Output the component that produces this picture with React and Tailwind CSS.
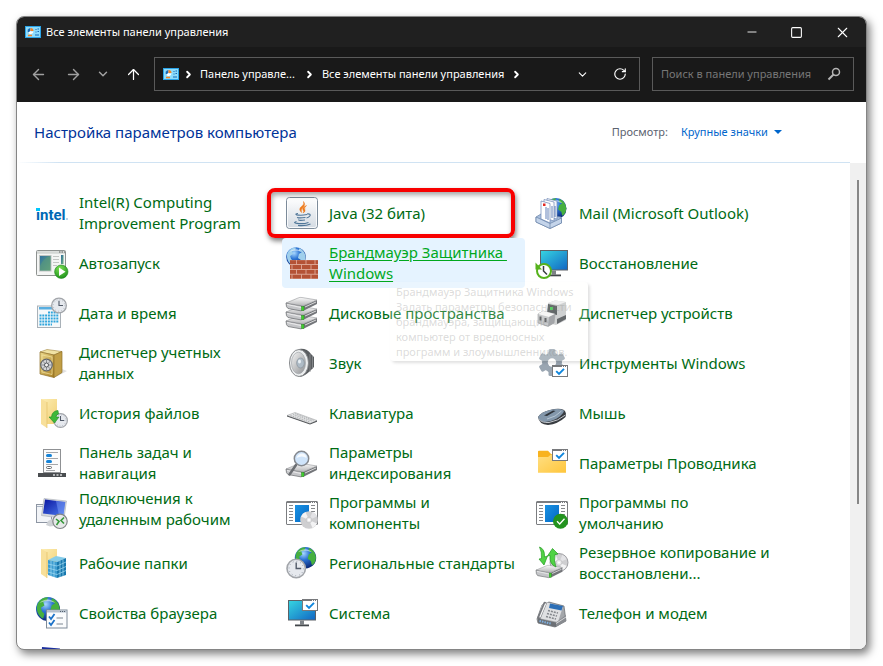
import {
  ArrowLeft,
  ArrowRight,
  ArrowUp,
  ChevronDown,
  ChevronRight,
  Minus,
  RotateCw,
  Square,
  X
} from "lucide-react";

/* ---------- shared gradients ---------- */

function IconDefs() {
  const stops = (id, a, b, vertical) => (
    <linearGradient id={id} x1="0" y1="0" x2={vertical ? "0" : "1"} y2="1">
      <stop offset="0" stopColor={a} />
      <stop offset="1" stopColor={b} />
    </linearGradient>
  );

  return (
    <svg className="absolute size-0" aria-hidden="true">
      <defs>
        {stops("screen", "#35d3e0", "#1268c4")}
        {stops("app", "#1a93e4", "#0568c4")}
        {stops("folder", "#ffdf83", "#ffc63c")}
        {stops("pale", "#fdeeb4", "#f1cf74")}
        {stops("metal", "#fafafa", "#b4b4b6", true)}
        {stops("steel", "#f4f4f4", "#8f9194")}
        {stops("gold", "#ecd98c", "#a97f22")}
        {stops("tube", "#0a16a0", "#4d7df0")}
        {stops("photo", "#2d6f9e", "#6fae7c")}
        {stops("tile", "#ffffff", "#d3dae2", true)}
        <radialGradient id="ocean" cx="0.4" cy="0.3" r="0.75">
          <stop offset="0" stopColor="#a8d8ff" />
          <stop offset="0.4" stopColor="#2c74d4" />
          <stop offset="1" stopColor="#08206e" />
        </radialGradient>
        <radialGradient id="green" cx="0.4" cy="0.25" r="0.8">
          <stop offset="0" stopColor="#7be052" />
          <stop offset="1" stopColor="#1c8f1a" />
        </radialGradient>
      </defs>
    </svg>
  );
}

/* ---------- icon parts ---------- */

function Globe({ x, y, r, land = "#46b03f" }) {
  return (
    <g transform={`translate(${x} ${y}) scale(${r / 10})`}>
      <circle r="10" fill="url(#ocean)" />
      <path d="M-9-3C-8-7-4-10 0-9.8L-1-7-4-6-3-3-6-1-5 2-3 4-4 8C-8 6-10 1-9-3Z" fill={land} />
      <path d="M3-9C7-8 9.500-4 9.800 0 9.500 4 8 6 6 7L5 3 2 1 3-3 6-5 3-6Z" fill={land} />
      <path d="M-7-5C-4-9 3-9 6-5 2-7-3-7-7-5Z" fill="#fff" opacity="0.5" />
    </g>
  );
}

function Clock({ x, y, r }) {
  return (
    <g transform={`translate(${x} ${y}) scale(${r / 10})`}>
      <circle r="9.200" fill="#e6e9ee" stroke="#a2a5aa" strokeWidth="1.600" />
      <circle r="7.200" fill="none" stroke="#8b93a0" strokeWidth="1" strokeDasharray="0.800 2.970" />
      <path d="M0-6V0H5" fill="none" stroke="#515a68" strokeWidth="1.400" />
    </g>
  );
}

function CheckPane({ x, y }) {
  return (
    <g transform={`translate(${x} ${y})`}>
      <rect x="0.500" y="0.500" width="15" height="11" fill="#fff" stroke="#77797c" />
      <path d="M1 1.500H15" stroke="#77797c" />
      <path d="M10 1.500h1M12 1.500h1M14 1.500h1" stroke="#fff" />
      <path d="M4.200 6.200 7 9 12 3.800" fill="none" stroke="#0f86dd" strokeWidth="1.900" />
    </g>
  );
}

function Drive({ y, height = 4 }) {
  return (
    <g transform={`translate(0 ${y})`}>
      <path d={`M17 9 31 3V${3 + height}L17 ${10 + height}Z`} fill="#74767a" />
      <path d={`M0 6 17 9V${9 + height}Q15 ${10.5 + height} 13 ${9.5 + height}L2 ${7.5 + height}Q0 ${6.5 + height} 0 6Z`} fill="#c4c5c8" stroke="#66686b" strokeWidth="0.700" />
      <path d="M0 6 12 1Q14 0 16 0.500L31 3 17 9Z" fill="url(#metal)" stroke="#85878a" strokeWidth="0.500" />
      <path d="M1 7.500 15 10.500M19 10 30 5" stroke="#f4f4f4" strokeWidth="0.800" />
      <rect x="15.500" y="9.500" width="2.500" height={height} fill="#3fd12d" stroke="#23811a" strokeWidth="0.400" />
    </g>
  );
}

function Monitor({ x, y }) {
  return (
    <g transform={`translate(${x} ${y})`}>
      <rect width="28" height="20.500" fill="#5c6167" />
      <rect x="1" y="1" width="26" height="18.500" fill="url(#screen)" />
      <path d="M12 20.500h4v4h-4Z" fill="#7d8287" />
      <rect x="7" y="24.500" width="14" height="1.800" fill="#43474b" />
    </g>
  );
}

function ProgramWindow() {
  return (
    <>
      <rect x="0.500" y="4.500" width="31" height="23" rx="0.500" fill="#fff" stroke="#7b7d80" />
      <path d="M1 5.500H31" stroke="#7b7d80" />
      <path d="M25 5.500h1M27 5.500h1M29 5.500h1" stroke="#fff" />
      <path d="M3 8.500h4M3 11.500h4M3 14.500h4M3 17.500h4M3 20.500h4M3 23.500h4M25 8.500h4M25 11.500h4M25 14.500h4M25 17.500h4M25 20.500h4" stroke="#85888c" />
      <rect x="9" y="8" width="14" height="17" fill="url(#app)" />
    </>
  );
}

function Disc({ x, y, r }) {
  return (
    <g transform={`translate(${x} ${y}) scale(${r / 10})`}>
      <circle r="10" fill="#cfcfd1" />
      <path d="M0 0-9-4A10 10 0 0 1-4-9ZM0 0 9 4A10 10 0 0 1 4 9Z" fill="#f3f3f4" />
      <path d="M0 0 4-9A10 10 0 0 1 9-4Z" fill="#e3e3e6" />
      <circle r="3.200" fill="#e9e9ea" stroke="#b2b2b5" strokeWidth="0.600" />
      <circle r="1.200" fill="#fff" />
    </g>
  );
}

function OpenFolder() {
  return (
    <>
      <path d="M5 2H21V27H11Z" fill="url(#pale)" />
      <path d="M5 2 11 5V31L5 27Z" fill="#f8e09a" />
      <path d="M11 5V31" stroke="#dfb95c" strokeWidth="0.600" />
    </>
  );
}

/* ---------- icons ---------- */

const icons = {
  intel: (
    <>
      <text x="0" y="23" fontSize="15" fontWeight="700" fill="#0068b5" className="font-[Roboto,sans-serif]">
        intel
      </text>
      <rect x="0" y="11" width="4" height="3" fill="#00c7fd" />
      <circle cx="31" cy="22" r="0.800" fill="#5c9bd0" />
    </>
  ),
  autoplay: (
    <>
      <rect x="0.500" y="3.500" width="29" height="25" rx="1" fill="#f4f5f4" stroke="#8e9290" />
      <path d="M1 5.500H29" stroke="#d3d6d4" strokeWidth="2.500" />
      <path d="M23 5h1.500M25.500 5H27M28 5h1" stroke="#5b5f5d" />
      <rect x="3.500" y="8.500" width="11.500" height="15.500" fill="url(#photo)" stroke="#c0c4c2" />
      <path d="M4 19Q8 10 14.500 9V23.500H4Z" fill="#5a9a7a" opacity="0.6" />
      <path d="M17 9.500h6M17 12.500h6M17 15.500h6M17 18.500h4" stroke="#c2c5c3" />
      <rect x="25" y="8" width="2.500" height="9" fill="url(#photo)" />
      <circle cx="25.300" cy="24.700" r="6.700" fill="url(#green)" stroke="#1a8418" strokeWidth="0.600" />
      <path d="M23 20.500 29.500 24.700 23 29Z" fill="#fff" />
    </>
  ),
  date: (
    <>
      <rect x="1.500" y="9" width="23" height="21.500" fill="#f5f8fa" stroke="#a9b1b8" />
      <rect x="3" y="10" width="20" height="2.500" fill="#58aee0" />
      <path d="M12 15.500h11M3.500 18.500H23M3.500 21.500H23M3.500 24.500H23M3.500 27.500H16" stroke="#2fa5dc" strokeWidth="2" strokeDasharray="2 0.800" />
      <Clock x={23} y={8.500} r={8} />
    </>
  ),
  credentials: (
    <>
      <path d="M20 30 31 24 26 22Z" fill="#000" opacity="0.12" />
      <path d="M4 5 11 2.500 26 4.500 18 8Z" fill="#f0e2a4" stroke="#917122" strokeWidth="0.500" />
      <path d="M4 5 18 8V30.500L4 27Z" fill="url(#gold)" stroke="#8f702a" strokeWidth="0.700" />
      <path d="M18 8 26 4.500V25.500L18 30.500Z" fill="#c19e45" stroke="#8f702a" strokeWidth="0.700" />
      <path d="M6 8 16 10V27.500L6 25Z" fill="none" stroke="#f2e2a0" strokeWidth="0.700" />
      <circle cx="10.500" cy="18" r="5.800" fill="#d4d5d7" stroke="#63666b" strokeWidth="1.200" />
      <path d="M10.500 12.500v11M5 18h11M6.600 14l7.800 8M14.400 14l-7.800 8" stroke="#8a8d92" strokeWidth="1" />
      <circle cx="10.500" cy="18" r="2" fill="#f7f7f7" stroke="#55585c" />
    </>
  ),
  history: (
    <>
      <OpenFolder />
      <Clock x={24.500} y={23.500} r={7.500} />
      <path d="M22 13.500Q16 14 15.500 20H13L18.500 26 23 20H20Q20 17.500 22.500 17Z" fill="#3fb83a" stroke="#218a20" strokeWidth="0.600" />
    </>
  ),
  taskbar: (
    <>
      <rect x="7.500" y="2.500" width="17" height="23" fill="#fcfcfc" stroke="#8f9194" />
      <path d="M10 5.500h12M10 11.500h12M10 17.500h12M10 23.500h9" stroke="#a5a7aa" />
      <rect x="10" y="7" width="6" height="3" rx="1.500" fill="#1583d8" />
      <rect x="10" y="13" width="6" height="3" rx="1.500" fill="#1583d8" />
      <rect x="10.500" y="19.500" width="5" height="2" rx="1" fill="#fff" stroke="#67696c" />
      <rect x="2" y="26" width="28" height="4" fill="#4a4d50" />
      <path d="M17 28h2M20.500 28h2M24 28h2" stroke="#d5d6d8" strokeWidth="1.500" />
    </>
  ),
  remote: (
    <>
      <rect x="0.500" y="7.500" width="15" height="18" fill="#f2f4f7" stroke="#8e96a3" />
      <path d="M1 9.500H8" stroke="#a9b4c4" />
      <path d="M12 24 20 20 24 28 14 29.500 10 28Z" fill="#cfd2d6" />
      <path d="M8 1.500 30.500 4 28 21.500 5.500 18.500Z" fill="#d6d9de" stroke="#9ba1a8" strokeWidth="0.500" />
      <path d="M9 2.500 29.300 5 27.300 19 7 16.500Z" fill="url(#tube)" />
      <path d="M20 4 29.300 5 27.300 19 23 18.300Z" fill="#86a9ff" opacity="0.45" />
      <circle cx="24" cy="24.300" r="7.200" fill="#e6e8e8" stroke="#818587" strokeWidth="1.200" />
      <path d="M20 22 23 24.500 20.500 28M28 20.500 25 23.500 28 26.500" fill="none" stroke="#35983a" strokeWidth="1.600" />
    </>
  ),
  workFolders: (
    <>
      <OpenFolder />
      <path d="M12 13 20 9 30 11 21 15Z" fill="#86cdea" />
      <path d="M12 13 21 15V31L12 28Z" fill="#3c9cd0" />
      <path d="M21 15 30 11V28L21 31Z" fill="#1878ae" />
      <path d="M12 17l9 2 9-4M12 21l9 2.500 9-4M12 25l9 2.500 9-4M15 14v15M18 14.500V30M24 14v16M27 12.500V29" fill="none" stroke="#a4dcf3" strokeWidth="0.700" />
    </>
  ),
  internet: (
    <>
      <Globe x={12} y={12} r={12} />
      <rect x="10.500" y="13" width="20.500" height="18" fill="#fbfcfd" stroke="#7e8b99" />
      <path d="M11 14.500H30.500" stroke="#b4c0cd" strokeWidth="2" />
      <path d="M24 14.500h1M26 14.500h1M28 14.500h1" stroke="#56616e" />
      <path d="M13 19.500 15 22 18.500 17M13 25.500 15 28 18.500 23" fill="none" stroke="#1c72c8" strokeWidth="1.800" />
      <path d="M20.500 21H27M20.500 27H27" stroke="#7c8792" />
    </>
  ),
  java: (
    <>
      <rect x="0.500" y="0.500" width="31" height="31" rx="3" fill="url(#tile)" stroke="#7c8b9a" />
      <rect x="1.500" y="1.500" width="29" height="29" rx="2" fill="none" stroke="#fff" opacity="0.8" />
      <path d="M17.500 4.500Q19 7 15.500 9.500 12 12 15.500 15.500 14.500 12.500 17 10.500 20 7.500 17.500 4.500Z" fill="#ee7a1c" stroke="#ee7a1c" strokeWidth="0.500" />
      <path d="M20.500 8.500Q15.500 10.500 17 13 18.500 14.500 17 16 20 14.500 18.800 12.500 18 10.500 20.500 8.500Z" fill="#ee7a1c" stroke="#ee7a1c" strokeWidth="0.500" />
      <g fill="none" stroke="#4f7698" strokeWidth="1.200">
        <path d="M12 16.500Q9 17 10.500 17.800 15 18.800 21 17.500M21 17Q25 16.500 24 18.800 23 20.500 20.500 21M11.500 20Q11 21.500 19.500 20.500M12.500 22.500Q12.500 24 19 23M10.500 24.500Q7 25.500 10 26.200 17 27.500 22.500 25.500M12 28.500Q20 29.200 24.500 27" />
      </g>
    </>
  ),
  firewall: (
    <>
      <Globe x={10} y={10} r={9.800} land="#9fcfec" />
      <rect x="4" y="13" width="28" height="19" fill="#dba391" />
      <path d="M4 15.200H32M4 20H32M4 24.800H32M4 29.600H32" stroke="#b45236" strokeWidth="3.800" />
      <path d="M10.500 13v4.400M20 13v4.400M29 13v4.400M6 17.800v4.600M15.500 17.800v4.600M25 17.800v4.600M10.500 22.600v4.600M20 22.600v4.600M29 22.600v4.600M6 27.400V32M15.500 27.400V32M25 27.400V32" stroke="#e4b3a4" strokeWidth="0.800" />
    </>
  ),
  storage: (
    <>
      <Drive y={18} />
      <Drive y={9} />
      <Drive y={0} />
    </>
  ),
  sound: (
    <>
      <path d="M13 2Q21 1 25 7L28 10V20L24 24Q19 29 14 30Z" fill="#5a5d60" />
      <path d="M24 7v18M26.500 9v13" stroke="#8f9296" strokeWidth="0.800" />
      <ellipse cx="13" cy="16" rx="9.500" ry="13.500" fill="#eceeef" stroke="#85888b" />
      <ellipse cx="12.500" cy="16" rx="7" ry="10.800" fill="url(#steel)" stroke="#9ba0a5" strokeWidth="0.600" />
      <ellipse cx="14.500" cy="16" rx="3.800" ry="5" fill="#aebbc6" stroke="#7f8b95" strokeWidth="0.600" />
      <ellipse cx="13.500" cy="14.500" rx="1.500" ry="2" fill="#e8eff4" />
    </>
  ),
  keyboard: (
    <>
      <path d="M1 18.500 9 15.500 31 23.500 24 26.500Z" fill="#e4e5e6" stroke="#97999b" strokeWidth="0.500" />
      <path d="M1 18.500 24 26.500 31 23.500V24.800L24 27.500 1 19.500Z" fill="#505356" />
      <path d="M4.500 18.500 24 25M7 17.500 26.500 24.200M9 16.600 28.500 23.500" stroke="#a6a8ab" strokeWidth="0.800" strokeDasharray="1.500 0.800" />
    </>
  ),
  indexing: (
    <>
      <Drive y={16} />
      <path d="M10 18 3.500 27.500" stroke="#6c6f73" strokeWidth="2.500" strokeLinecap="round" />
      <circle cx="15.500" cy="11.500" r="7.200" fill="#cfe4fa" stroke="#85898f" strokeWidth="1.500" />
      <path d="M10.500 11Q12 6 17 6.500 21 8 20.500 11 16 8 10.500 11Z" fill="#fff" opacity="0.8" />
    </>
  ),
  programs: (
    <>
      <ProgramWindow />
      <Disc x={23} y={23} r={8.800} />
    </>
  ),
  region: (
    <>
      <Globe x={19.500} y={10.700} r={10.700} />
      <Clock x={10.200} y={21.500} r={10} />
    </>
  ),
  system: (
    <>
      <Monitor x={2} y={3} />
      <CheckPane x={16} y={2} />
    </>
  ),
  mail: (
    <>
      <Globe x={20} y={11.500} r={10.500} />
      <path d="M0 20 5 17 25 20 25.500 26 14 31.500 0 25Z" fill="#a9bfdd" stroke="#6882a8" strokeWidth="0.700" />
      <path d="M11 1.500 21 4V22L11 20Z" fill="#f4f7fc" stroke="#6d86b5" strokeWidth="0.700" />
      <path d="M8 2.500 18 5V24L8 21Z" fill="#fff" stroke="#6d86b5" strokeWidth="0.700" />
      <path d="M5 4 14 6.500V26L5 22Z" fill="#fff" stroke="#6d86b5" strokeWidth="0.700" />
      <path d="M10 10v12M12 11v12M16 9v12M19 9v11" stroke="#3b61a6" strokeWidth="0.800" />
      <rect x="7" y="6.500" width="2.500" height="2.500" fill="#e42a22" />
      <path d="M0 20 14 26.500 25.500 21V26L14 31.500 0 25Z" fill="#c4d4ea" stroke="#6882a8" strokeWidth="0.700" />
      <path d="M14 26.500V31" stroke="#6882a8" strokeWidth="0.700" />
    </>
  ),
  recovery: (
    <>
      <Monitor x={4} y={3} />
      <circle cx="8" cy="24" r="7" fill="#fff" stroke="#56b21c" strokeWidth="2" />
      <path d="M-0.500 15.500V22.500H6Z" fill="#56b21c" />
      <path d="M7.500 19V24L11 27.500" fill="none" stroke="#3a3d40" strokeWidth="1.500" />
    </>
  ),
  devices: (
    <>
      <path d="M12 6 19 3.500 30 5V23L20 28 12 26Z" fill="#c3c5c7" />
      <path d="M12 6 19 3.500 30 5 22 8Z" fill="#ececed" />
      <path d="M12 7 21 9V18L11 16Z" fill="#3c4245" />
      <rect x="14" y="10" width="3" height="3" fill="#32c03e" />
      <path d="M21 22 30 18V22L21 27Z" fill="#3f4347" />
      <path d="M2 17 7 14 19 17 18 26 12 29.500 2 26Z" fill="#b9bbbe" stroke="#808387" strokeWidth="0.600" />
      <path d="M2 17 7 14 19 17 13 20Z" fill="#f3f3f3" />
      <path d="M13 20 19 17 18 26 12 29.500Z" fill="#8c8f93" />
      <path d="M4.500 19.500v4M9.500 21v4" stroke="#3c4043" strokeWidth="2" />
    </>
  ),
  tools: (
    <>
      <g fill="#9aa6b2">
        <circle cx="16" cy="15.500" r="10" />
        <rect x="12.500" y="2" width="7" height="27" rx="1.500" />
        <rect x="12.500" y="2" width="7" height="27" rx="1.500" transform="rotate(60 16 15.500)" />
        <rect x="12.500" y="2" width="7" height="27" rx="1.500" transform="rotate(120 16 15.500)" />
      </g>
      <circle cx="16" cy="15.500" r="4.200" fill="#fff" />
      <CheckPane x={16} y={18} />
    </>
  ),
  mouse: (
    <>
      <path d="M2 20Q5 15 14 13 23 10.500 28 13 31 16 29.500 20 22 27 12 28 3 27.500 2 20Z" fill="#383c41" />
      <path d="M2 20Q5 15 14 13 23 10.800 28 13.500 28 17 20 22 14 25 9 25 3 24 2 20Z" fill="#8397ab" />
      <path d="M2.500 22Q6 26 13 25.500 22 24 29.500 18" fill="none" stroke="#d0d5da" strokeWidth="0.900" />
      <path d="M8 18.500 17 13.500 19.500 14 11 19Z" fill="#30353b" />
      <path d="M11 22Q20 20 25.500 14" stroke="#b6c6d4" strokeWidth="1" fill="none" />
    </>
  ),
  explorer: (
    <>
      <path d="M2 4.500Q2 3.700 3 3.700H12L15 7H30V12H2Z" fill="#f8b31f" />
      <path d="M2 10H12L15 7.500H30V25.700H2Z" fill="url(#folder)" />
      <CheckPane x={16} y={2} />
    </>
  ),
  defaults: (
    <>
      <ProgramWindow />
      <circle cx="24.500" cy="24.300" r="7.500" fill="#23931f" />
      <path d="M21 24.300 23.700 27 28.500 21.800" fill="none" stroke="#fff" strokeWidth="1.300" />
    </>
  ),
  backup: (
    <>
      <Disc x={23} y={15.500} r={9} />
      <circle cx="23" cy="15.500" r="9" fill="none" stroke="#8b8c90" strokeWidth="0.800" />
      <g transform="translate(0 18) scale(0.85)">
        <Drive y={0} height={5} />
      </g>
      <path d="M3.500 0Q9 2 8.500 10L11.500 9 8 18 3 12 5.500 11.500Q6 5 3.500 0Z" fill="#50d344" stroke="#239a20" strokeWidth="0.700" />
      <path d="M20 20Q13 17 14 8.500L11.500 9 16.500 1.500 22 7 19 7.500Q17.500 14 20 20Z" fill="#50d344" stroke="#239a20" strokeWidth="0.700" />
    </>
  ),
  phone: (
    <>
      <path d="M1 22 6 8 13 5 28 9 30 24 19 30 2 26Z" fill="#a4a7ab" stroke="#66696d" strokeWidth="0.700" />
      <path d="M6 8 11 5.500 27 9.500 22 25 2 21Z" fill="#dfe0e2" />
      <path d="M3 21 9 6.500" stroke="#77797e" strokeWidth="3.400" strokeLinecap="round" />
      <path d="M4 20 9.500 7" stroke="#f5f5f5" strokeWidth="1.300" strokeLinecap="round" />
      <path d="M14 6.500 27 9 25.500 13.500 13 11Z" fill="#2c6eb5" />
      <path d="M12 13.500l10 2.500M11 16.500l10 2.500M10 19.500l10 2.500" stroke="#85888d" strokeWidth="1.500" strokeDasharray="2 1" />
      <path d="M2 21.500 20 25.500V30L2 26Z" fill="#6c7075" />
      <path d="M3.500 24 15 26.600" stroke="#7dafe0" strokeWidth="2" strokeDasharray="1.500 1" />
      <path d="M20 25.500 30 18V24L20 30Z" fill="#888b90" />
      <path d="M20 26.500 30 20" stroke="#e9e9ea" strokeWidth="0.800" />
    </>
  ),
  display: (
    <>
      <path d="M6 0 24 1.500 23 16 5 14Z" fill="#1c2f9e" />
      <path d="M9 20 20 17 24 27 9 27Z" fill="#cfd2d6" />
    </>
  )
};

const items = [
  { icon: "intel", label: "Intel(R) Computing\nImprovement Program" },
  { icon: "java", label: "Java (32 бита)", marked: true },
  { icon: "mail", label: "Mail (Microsoft Outlook)" },
  { icon: "autoplay", label: "Автозапуск" },
  {
    icon: "firewall",
    label: "Брандмауэр Защитника \nWindows",
    hovered: true,
    tip: "Брандмауэр Защитника Windows\nЗадать параметры безопасности\nбрандмауэра, защищающие\nкомпьютер от вредоносных\nпрограмм и злоумышленников."
  },
  { icon: "recovery", label: "Восстановление" },
  { icon: "date", label: "Дата и время" },
  { icon: "storage", label: "Дисковые пространства" },
  { icon: "devices", label: "Диспетчер устройств" },
  { icon: "credentials", label: "Диспетчер учетных\nданных" },
  { icon: "sound", label: "Звук" },
  { icon: "tools", label: "Инструменты Windows" },
  { icon: "history", label: "История файлов" },
  { icon: "keyboard", label: "Клавиатура" },
  { icon: "mouse", label: "Мышь" },
  { icon: "taskbar", label: "Панель задач и\nнавигация" },
  { icon: "indexing", label: "Параметры\nиндексирования" },
  { icon: "explorer", label: "Параметры Проводника" },
  { icon: "remote", label: "Подключения к\nудаленным рабочим", top: true },
  { icon: "programs", label: "Программы и\nкомпоненты" },
  { icon: "defaults", label: "Программы по\nумолчанию" },
  { icon: "workFolders", label: "Рабочие папки" },
  { icon: "region", label: "Региональные стандарты" },
  { icon: "backup", label: "Резервное копирование и\nвосстановлени..." },
  { icon: "internet", label: "Свойства браузера" },
  { icon: "system", label: "Система" },
  { icon: "phone", label: "Телефон и модем" },
  { icon: "display", label: "" }
];

function PanelIcon() {
  return (
    <svg viewBox="0 0 16 12" className="h-3 w-4 shrink-0" aria-hidden="true">
      <rect width="16" height="12" fill="#2ba4e8" />
      <rect x="1" y="1" width="14" height="10" fill="#8edcfb" />
      <path d="M6 2.500A2.700 2.700 0 1 0 8.500 5.500H6Z" fill="#fff" />
      <path d="M5.500 2A3 3 0 0 0 3 6.500L5.500 5Z" fill="#1769b5" />
      <path d="M5.500 2A3 3 0 0 1 8.500 5H5.500Z" fill="#f58220" />
      <path d="M10.500 3.500h1M12.500 3h1.500M10.500 6h1M12.500 5.500h1.500M10 9h4" stroke="#1769b5" />
      <path d="M3 9.500h4" stroke="#f58220" strokeWidth="1.500" />
    </svg>
  );
}

function PanelItem({ item }) {
  return (
    <li className="relative h-[50px] pr-[7px]">
      <a
        href="#"
        className={
          item.hovered
            ? "flex h-full items-center gap-[11px] rounded-sm bg-[#e5f3ff] pl-1 text-[#00a81e] underline underline-offset-2"
            : "flex h-full items-center gap-[11px] pl-1 text-[#006b14]"
        }
      >
        <svg viewBox="0 0 32 32" className="size-8 shrink-0 overflow-visible" aria-hidden="true">
          {icons[item.icon]}
        </svg>
        <span className={item.top ? "self-start whitespace-pre" : "whitespace-pre"}>{item.label}</span>
      </a>

      {item.marked && (
        <div className="pointer-events-none absolute inset-y-0 -left-[15px] w-[248px] rounded-lg border-4 border-[#f80000] shadow-[1px_3px_5px_rgba(0,0,0,0.5),inset_1px_3px_5px_rgba(0,0,0,0.35)]" />
      )}

      {item.tip && (
        <div
          role="tooltip"
          className="absolute left-[108px] top-11 z-10 w-[198px] rounded-sm bg-[#fffffa]/20 px-1.5 py-0.5 text-[11px] leading-[15px] whitespace-pre text-[#888]/30 shadow-[2px_2px_3px_rgba(0,0,0,0.12)]"
        >
          {item.tip}
        </div>
      )}
    </li>
  );
}

export default function App() {
  return (
    <div className="h-screen bg-white p-4 font-['Noto_Sans','Open_Sans',sans-serif]">
      <IconDefs />

      <main className="flex h-full flex-col overflow-hidden rounded-lg border border-[#858585] bg-white shadow-[3px_4px_9px_rgba(0,0,0,0.5)]">
        {/* Title bar */}
        <header className="flex h-[30px] shrink-0 items-center bg-[#202020] pl-2 text-[11px] text-white">
          <PanelIcon />
          <h1 className="ml-[5px] flex-1">Все элементы панели управления</h1>
          <button aria-label="Свернуть" className="flex h-full w-[45px] items-center justify-center">
            <Minus size={14} strokeWidth={1.5} />
          </button>
          <button aria-label="Развернуть" className="flex h-full w-[45px] items-center justify-center">
            <Square size={13} strokeWidth={2} />
          </button>
          <button aria-label="Закрыть" className="flex h-full w-[47px] items-center justify-center">
            <X size={17} strokeWidth={1.5} />
          </button>
        </header>

        {/* Navigation */}
        <nav className="flex h-[55px] shrink-0 items-start bg-[#191919] pt-2.5 pr-3 text-[11px] text-white">
          <div className="flex h-[34px] w-[137px] shrink-0 items-center text-[#a0a0a0]">
            <button aria-label="Назад" className="flex w-[42px] justify-center">
              <ArrowLeft size={17} />
            </button>
            <button aria-label="Вперед" className="flex w-7 justify-center">
              <ArrowRight size={17} />
            </button>
            <button aria-label="Последние расположения" className="flex w-8 justify-center">
              <ChevronDown size={14} strokeWidth={2.5} />
            </button>
            <button aria-label="Вверх" className="flex w-7 justify-center text-white">
              <ArrowUp size={17} strokeWidth={1.75} />
            </button>
          </div>

          <div className="flex h-[34px] min-w-0 flex-1 items-center border border-[#5a5a5a] pl-2">
            <PanelIcon />
            <ChevronRight size={11} strokeWidth={4} className="mx-1 shrink-0" />
            <button className="mx-0.5 whitespace-nowrap">Панель управле...</button>
            <ChevronRight size={11} strokeWidth={4} className="mx-[7px] shrink-0" />
            <button className="whitespace-nowrap">Все элементы панели управления</button>
            <ChevronRight size={11} strokeWidth={4} className="mx-[7px] shrink-0" />
            <button aria-label="Предыдущие расположения" className="ml-auto flex w-[37px] shrink-0 justify-center">
              <ChevronDown size={13} />
            </button>
            <button aria-label="Обновить" className="flex w-[38px] shrink-0 justify-center">
              <RotateCw size={14} />
            </button>
          </div>

          <label className="ml-3 flex h-[34px] w-[202px] shrink-0 items-center border border-[#5a5a5a] pr-3 pl-2">
            <input
              type="text"
              aria-label="Поиск"
              placeholder="Поиск в панели управления"
              className="min-w-0 flex-1 bg-transparent outline-none placeholder:text-[#777]"
            />
            <svg viewBox="0 0 14 14" className="size-3.5 shrink-0" fill="none" stroke="#b4b4b4" aria-hidden="true">
              <circle cx="9" cy="5" r="3.500" strokeWidth="1.500" />
              <path d="M6.500 7.500 1.500 12.500" strokeWidth="2" />
            </svg>
          </label>
        </nav>

        {/* Page heading */}
        <section className="flex h-[60px] shrink-0 items-center pr-[84px] pl-[17px]">
          <h2 className="flex-1 text-[15px] text-[#003399]">Настройка параметров компьютера</h2>
          <label htmlFor="view" className="mr-[13px] text-[11px] text-[#5c6370]">
            Просмотр:
          </label>
          <select id="view" className="appearance-none bg-transparent text-[11px] text-[#0066cc]">
            <option>Крупные значки</option>
          </select>
          <svg viewBox="0 0 8 4" className="ml-1.5 h-1 w-2" aria-hidden="true">
            <path d="M0 0H8L4 4Z" fill="#0066cc" />
          </svg>
        </section>
        <div className="mr-4 h-px shrink-0 bg-linear-to-r from-white via-[#d0e3f3] via-5% to-[#d0e3f3]" />

        {/* Items */}
        <div className="flex min-h-0 flex-1">
          <ul className="grid min-w-0 flex-1 grid-cols-[repeat(auto-fill,250px)] content-start overflow-hidden pt-[25px] pl-[15px] text-[15px] leading-[21px]">
            {items.map((item) => (
              <PanelItem key={item.icon} item={item} />
            ))}
          </ul>
          <div className="w-4 shrink-0 bg-[#f0f0f0] pt-[17px]">
            <div className="mx-auto h-[69%] w-0.5 bg-[#868686]" />
          </div>
        </div>
      </main>
    </div>
  );
}
